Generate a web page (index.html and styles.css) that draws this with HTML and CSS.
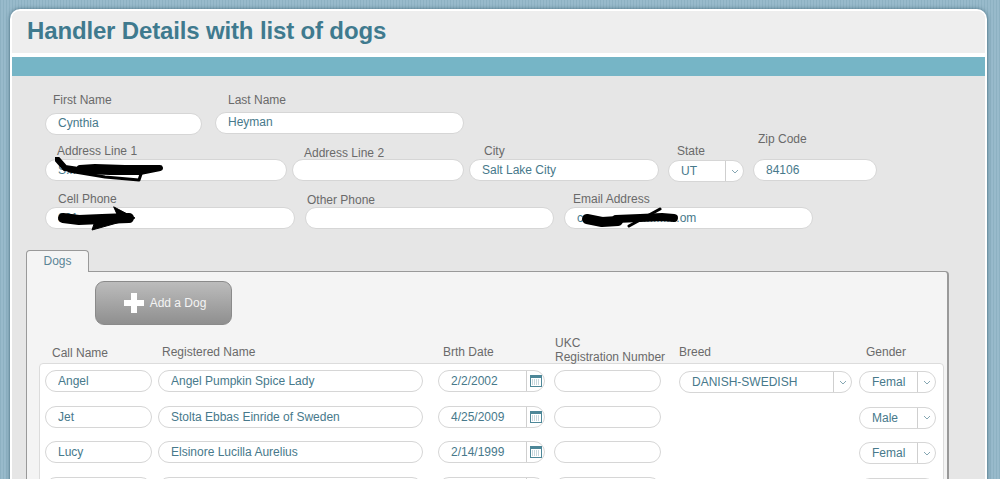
FILE: index.html
```html
<!DOCTYPE html>
<html lang="en">
<head>
<meta charset="utf-8">
<title>Handler Details with list of dogs</title>
<link rel="stylesheet" href="styles.css">
</head>
<body>
<div class="page">
  <main class="panel">
    <header class="panel-head"><h1>Handler Details with list of dogs</h1></header>
    <div class="panel-bar"></div>
    <div class="panel-body">

      <div class="form-row row-name">
        <div class="field f-first"><label>First Name</label><input class="text" value="Cynthia"></div>
        <div class="field f-last"><label>Last Name</label><input class="text" value="Heyman"></div>
      </div>

      <div class="form-row row-address">
        <div class="field f-addr1"><label>Address Line 1</label>
          <div class="redacted">
            <input class="text" value="S.....................re">
            <svg class="scribble scribble-addr" width="110" height="26" viewBox="0 0 110 26"><path d="M2 2L10 11L30 14L55 15L85 15L105 11L70 11L40 10L25 11"/><path class="mid" d="M14 14L50 20L84 23L86 17"/></svg>
          </div>
        </div>
        <div class="field f-addr2"><label>Address Line 2</label><input class="text"></div>
        <div class="field f-city"><label>City</label><input class="text" value="Salt Lake City"></div>
        <div class="field f-state"><label>State</label>
          <div class="combo"><span class="combo-value">UT</span><span class="combo-btn"><svg width="8" height="5" viewBox="0 0 8 5"><path d="M1 1l3 3 3-3"/></svg></span></div>
        </div>
        <div class="field f-zip"><label>Zip Code</label><input class="text" value="84106"></div>
      </div>

      <div class="form-row row-contact">
        <div class="field f-cell"><label>Cell Phone</label>
          <div class="redacted">
            <input class="text" value="801..........">
            <svg class="scribble scribble-cell" width="80" height="26" viewBox="0 0 80 26"><path class="heavy" d="M6 12L22 14L45 13L72 12"/><path class="fill" d="M57 1L78 12L35 24L38 15L60 9Z"/></svg>
          </div>
        </div>
        <div class="field f-other"><label>Other Phone</label><input class="text"></div>
        <div class="field f-email"><label>Email Address</label>
          <div class="redacted">
            <input class="text" value="c.............................om">
            <svg class="scribble scribble-email" width="102" height="24" viewBox="0 0 102 24"><path class="heavy" d="M7 12L22 15L38 14"/><path class="wide" d="M36 12L60 11L82 10L94 11"/><path class="thin" d="M49 19L80 2"/></svg>
          </div>
        </div>
      </div>

      <section class="tabs">
        <div class="tab">Dogs</div>
        <div class="tab-panel">
          <button class="add-btn" type="button">
            <svg width="20" height="20" viewBox="0 0 20 20"><path d="M7 0h6v7h7v6h-7v7H7v-7H0V7h7z"/></svg>
            <span>Add a Dog</span>
          </button>

          <div class="dog-cols dog-head">
            <span class="h-call">Call Name</span>
            <span class="h-reg">Registered Name</span>
            <span class="h-date">Brth Date</span>
            <span class="h-ukc">UKC<br>Registration Number</span>
            <span class="h-breed">Breed</span>
            <span class="h-gender">Gender</span>
          </div>

          <div class="dog-box">
            <div class="dog-cols dog-row">
              <input class="text w-call" value="Angel">
              <input class="text w-reg" value="Angel Pumpkin Spice Lady">
              <div class="combo w-date"><span class="combo-value">2/2/2002</span><span class="combo-btn"><svg class="cal" width="12" height="12" viewBox="0 0 12 12"><rect x=".5" y=".5" width="11" height="11" fill="#fff" stroke="#4d8798"/><rect width="12" height="3" fill="#4d8798"/><path class="dots" d="M2 5h8M2 7h8M2 9h8"/></svg></span></div>
              <input class="text w-ukc">
              <div class="combo w-breed"><span class="combo-value">DANISH-SWEDISH</span><span class="combo-btn"><svg width="8" height="5" viewBox="0 0 8 5"><path d="M1 1l3 3 3-3"/></svg></span></div>
              <div class="combo w-gender"><span class="combo-value">Femal</span><span class="combo-btn"><svg width="8" height="5" viewBox="0 0 8 5"><path d="M1 1l3 3 3-3"/></svg></span></div>
            </div>
            <div class="dog-cols dog-row">
              <input class="text w-call" value="Jet">
              <input class="text w-reg" value="Stolta Ebbas Einride of Sweden">
              <div class="combo w-date"><span class="combo-value">4/25/2009</span><span class="combo-btn"><svg class="cal" width="12" height="12" viewBox="0 0 12 12"><rect x=".5" y=".5" width="11" height="11" fill="#fff" stroke="#4d8798"/><rect width="12" height="3" fill="#4d8798"/><path class="dots" d="M2 5h8M2 7h8M2 9h8"/></svg></span></div>
              <input class="text w-ukc">
              <div class="w-breed"></div>
              <div class="combo w-gender"><span class="combo-value">Male</span><span class="combo-btn"><svg width="8" height="5" viewBox="0 0 8 5"><path d="M1 1l3 3 3-3"/></svg></span></div>
            </div>
            <div class="dog-cols dog-row">
              <input class="text w-call" value="Lucy">
              <input class="text w-reg" value="Elsinore Lucilla Aurelius">
              <div class="combo w-date"><span class="combo-value">2/14/1999</span><span class="combo-btn"><svg class="cal" width="12" height="12" viewBox="0 0 12 12"><rect x=".5" y=".5" width="11" height="11" fill="#fff" stroke="#4d8798"/><rect width="12" height="3" fill="#4d8798"/><path class="dots" d="M2 5h8M2 7h8M2 9h8"/></svg></span></div>
              <input class="text w-ukc">
              <div class="w-breed"></div>
              <div class="combo w-gender"><span class="combo-value">Femal</span><span class="combo-btn"><svg width="8" height="5" viewBox="0 0 8 5"><path d="M1 1l3 3 3-3"/></svg></span></div>
            </div>
            <div class="dog-cols dog-row">
              <input class="text w-call">
              <input class="text w-reg">
              <div class="combo w-date"><span class="combo-value"></span><span class="combo-btn"></span></div>
              <input class="text w-ukc">
              <div class="w-breed"></div>
              <div class="combo w-gender"><span class="combo-value"></span><span class="combo-btn"></span></div>
            </div>
          </div>
        </div>
      </section>
    </div>
  </main>
</div>
</body>
</html>
```

FILE: styles.css
```css
* { box-sizing: border-box; }

html, body { margin: 0; height: 100%; }

body {
  font-family: "Liberation Sans", Arial, sans-serif;
  font-size: 12px;
  color: #6a6a6a;
  overflow: hidden;
}

.page {
  height: 479px;
  overflow: hidden;
  padding: 9px 13px 0 10px;
  background: repeating-linear-gradient(90deg, #8db1c2 0 1px, #98bacb 1px 3px);
}

.panel {
  border: 2px solid #fff;
  border-bottom: 0;
  border-radius: 10px 10px 0 0;
  background: #e6e6e6;
  box-shadow: 0 0 4px rgba(40, 80, 100, .7);
  height: 600px;
  overflow: hidden;
}

.panel-head {
  height: 46px;
  padding: 0 0 2px 15px;
  display: flex;
  align-items: center;
  background: #eeeeee;
  border-bottom: 4px solid #fff;
}

h1 {
  margin: 0;
  font-size: 24px;
  font-weight: bold;
  color: #3f7a8e;
  letter-spacing: -0.15px;
}

.panel-bar { height: 19px; background: #76b5c6; }

.panel-body { padding: 17px 36px 0 33px; }

/* upper form */
.form-row { display: flex; }
.row-name { align-items: flex-start; }
.row-name .text { padding-bottom: 2px; }
.row-address { align-items: flex-end; margin-top: -3px; }
.row-contact { align-items: flex-end; margin-top: 10px; margin-bottom: 21px; }

.field { display: flex; flex-direction: column; flex: none; }
.field label { display: block; line-height: 14px; margin-bottom: 1px; }

.text {
  display: block;
  width: 100%;
  height: 22px;
  padding: 0 12px;
  border: 1px solid #d6d6d6;
  border-radius: 11px;
  background: #fff;
  font: 12px "Liberation Sans", Arial, sans-serif;
  color: #47798b;
  outline: 0;
}

.redacted { position: relative; }

.scribble { position: absolute; pointer-events: none; }
.scribble path { fill: none; stroke: #000; stroke-width: 6; stroke-linejoin: round; stroke-linecap: round; }
.scribble path.fill { fill: #000; stroke-width: 1; }
.scribble path.thin { stroke-width: 3; }
.scribble path.mid { stroke-width: 3; }
.scribble path.wide { stroke-width: 8; }
.scribble path.heavy { stroke-width: 10; }
.scribble-addr { left: 10px; top: -2px; }
.scribble-cell { left: 12px; top: -1px; }
.scribble-email { left: 16px; top: 0; }

.f-first { width: 157px; }
.f-first label { margin: 0 0 6px 8px; }
.f-last { width: 249px; margin-left: 13px; }
.f-last label { margin: 0 0 5px 13px; }

.f-addr1 { width: 242px; }
.f-addr1 label { margin-left: 12px; }
.f-addr2 { width: 172px; margin-left: 5px; }
.f-addr2 label { margin: 0 0 -1px 12px; }
.f-city { width: 190px; margin-left: 5px; }
.f-city label { margin-left: 15px; }
.f-state { width: 76px; margin-left: 9px; }
.f-state label { margin: 0 0 2px 9px; }
.f-zip { width: 124px; margin-left: 9px; }
.f-zip label { margin: 0 0 13px 5px; }
.f-addr1, .f-addr2, .f-city, .f-zip { padding-bottom: 1px; }

.f-cell { width: 250px; }
.f-cell label { margin-left: 13px; }
.f-other { width: 249px; margin-left: 10px; }
.f-other label { margin: 0 0 0 2px; }
.f-email { width: 249px; margin-left: 10px; }
.f-email label { margin-left: 9px; }

/* combo */
.combo {
  display: flex;
  align-items: center;
  height: 22px;
  border: 1px solid #d6d6d6;
  border-radius: 11px;
  background: #fff;
  color: #47798b;
}
.combo-value { flex: 1; min-width: 0; padding-left: 12px; white-space: nowrap; overflow: hidden; }
.combo-btn {
  flex: none;
  width: 18px;
  height: 100%;
  border-left: 1px solid #cfcfcf;
  display: flex;
  align-items: center;
  justify-content: center;
}
.combo-btn path { fill: none; stroke: #86a7b3; stroke-width: 1; }
.combo-btn .cal .dots { stroke: #8fb0bc; stroke-dasharray: 1 1; }

/* tabs */
.tabs { margin-left: -19px; }
.tab {
  position: relative;
  z-index: 1;
  width: 63px;
  height: 22px;
  margin-bottom: -1px;
  border: 1px solid #999;
  border-bottom: 0;
  border-radius: 4px 4px 0 0;
  background: #f4f4f4;
  text-align: center;
  line-height: 20px;
  color: #5b8596;
}
.tab-panel {
  border: 1px solid #999;
  border-right-width: 2px;
  border-radius: 0 4px 0 0;
  background: #f4f4f4;
  padding: 9px 3px 0 12px;
}

.add-btn {
  display: flex;
  align-items: center;
  justify-content: center;
  gap: 6px;
  width: 137px;
  height: 44px;
  margin-left: 56px;
  padding: 0 0 0 3px;
  border: 1px solid #8a8a8a;
  border-radius: 9px;
  background: linear-gradient(#bcbcbc, #8f8f8f);
  font: 12px "Liberation Sans", Arial, sans-serif;
  color: #f4f4f4;
}
.add-btn svg { fill: #fff; }

/* dogs grid */
.dog-cols {
  display: grid;
  grid-template-columns: 113px 280px 116px 125px 180px 77px;
}
.dog-head {
  position: relative;
  z-index: 1;
  height: 28px;
  margin-top: 11px;
  margin-bottom: -1px;
  padding-left: 6px;
  align-items: end;
  line-height: 14px;
}
.dog-head span { padding-bottom: 5px; }
.dog-head .h-call { margin-left: 7px; padding-bottom: 4px; }
.dog-head .h-reg { margin-left: 4px; }
.dog-head .h-date { margin-left: 5px; }
.dog-head .h-ukc { margin-left: 1px; padding-bottom: 0; white-space: nowrap; }
.dog-head .h-breed { margin-left: 0; }
.dog-head .h-gender { margin-left: 7px; }

.dog-box {
  border: 1px solid #dcdcdc;
  border-radius: 4px;
  background: #fff;
  padding: 6px 6px 0 5px;
}
.dog-row { height: 35.5px; }
.w-call, .w-date, .w-ukc { width: 107px !important; }
.w-reg { width: 265px !important; }
.w-breed { width: 173px; margin-top: 1px; }
.w-gender { width: 77px; margin-top: 1px; }
```
